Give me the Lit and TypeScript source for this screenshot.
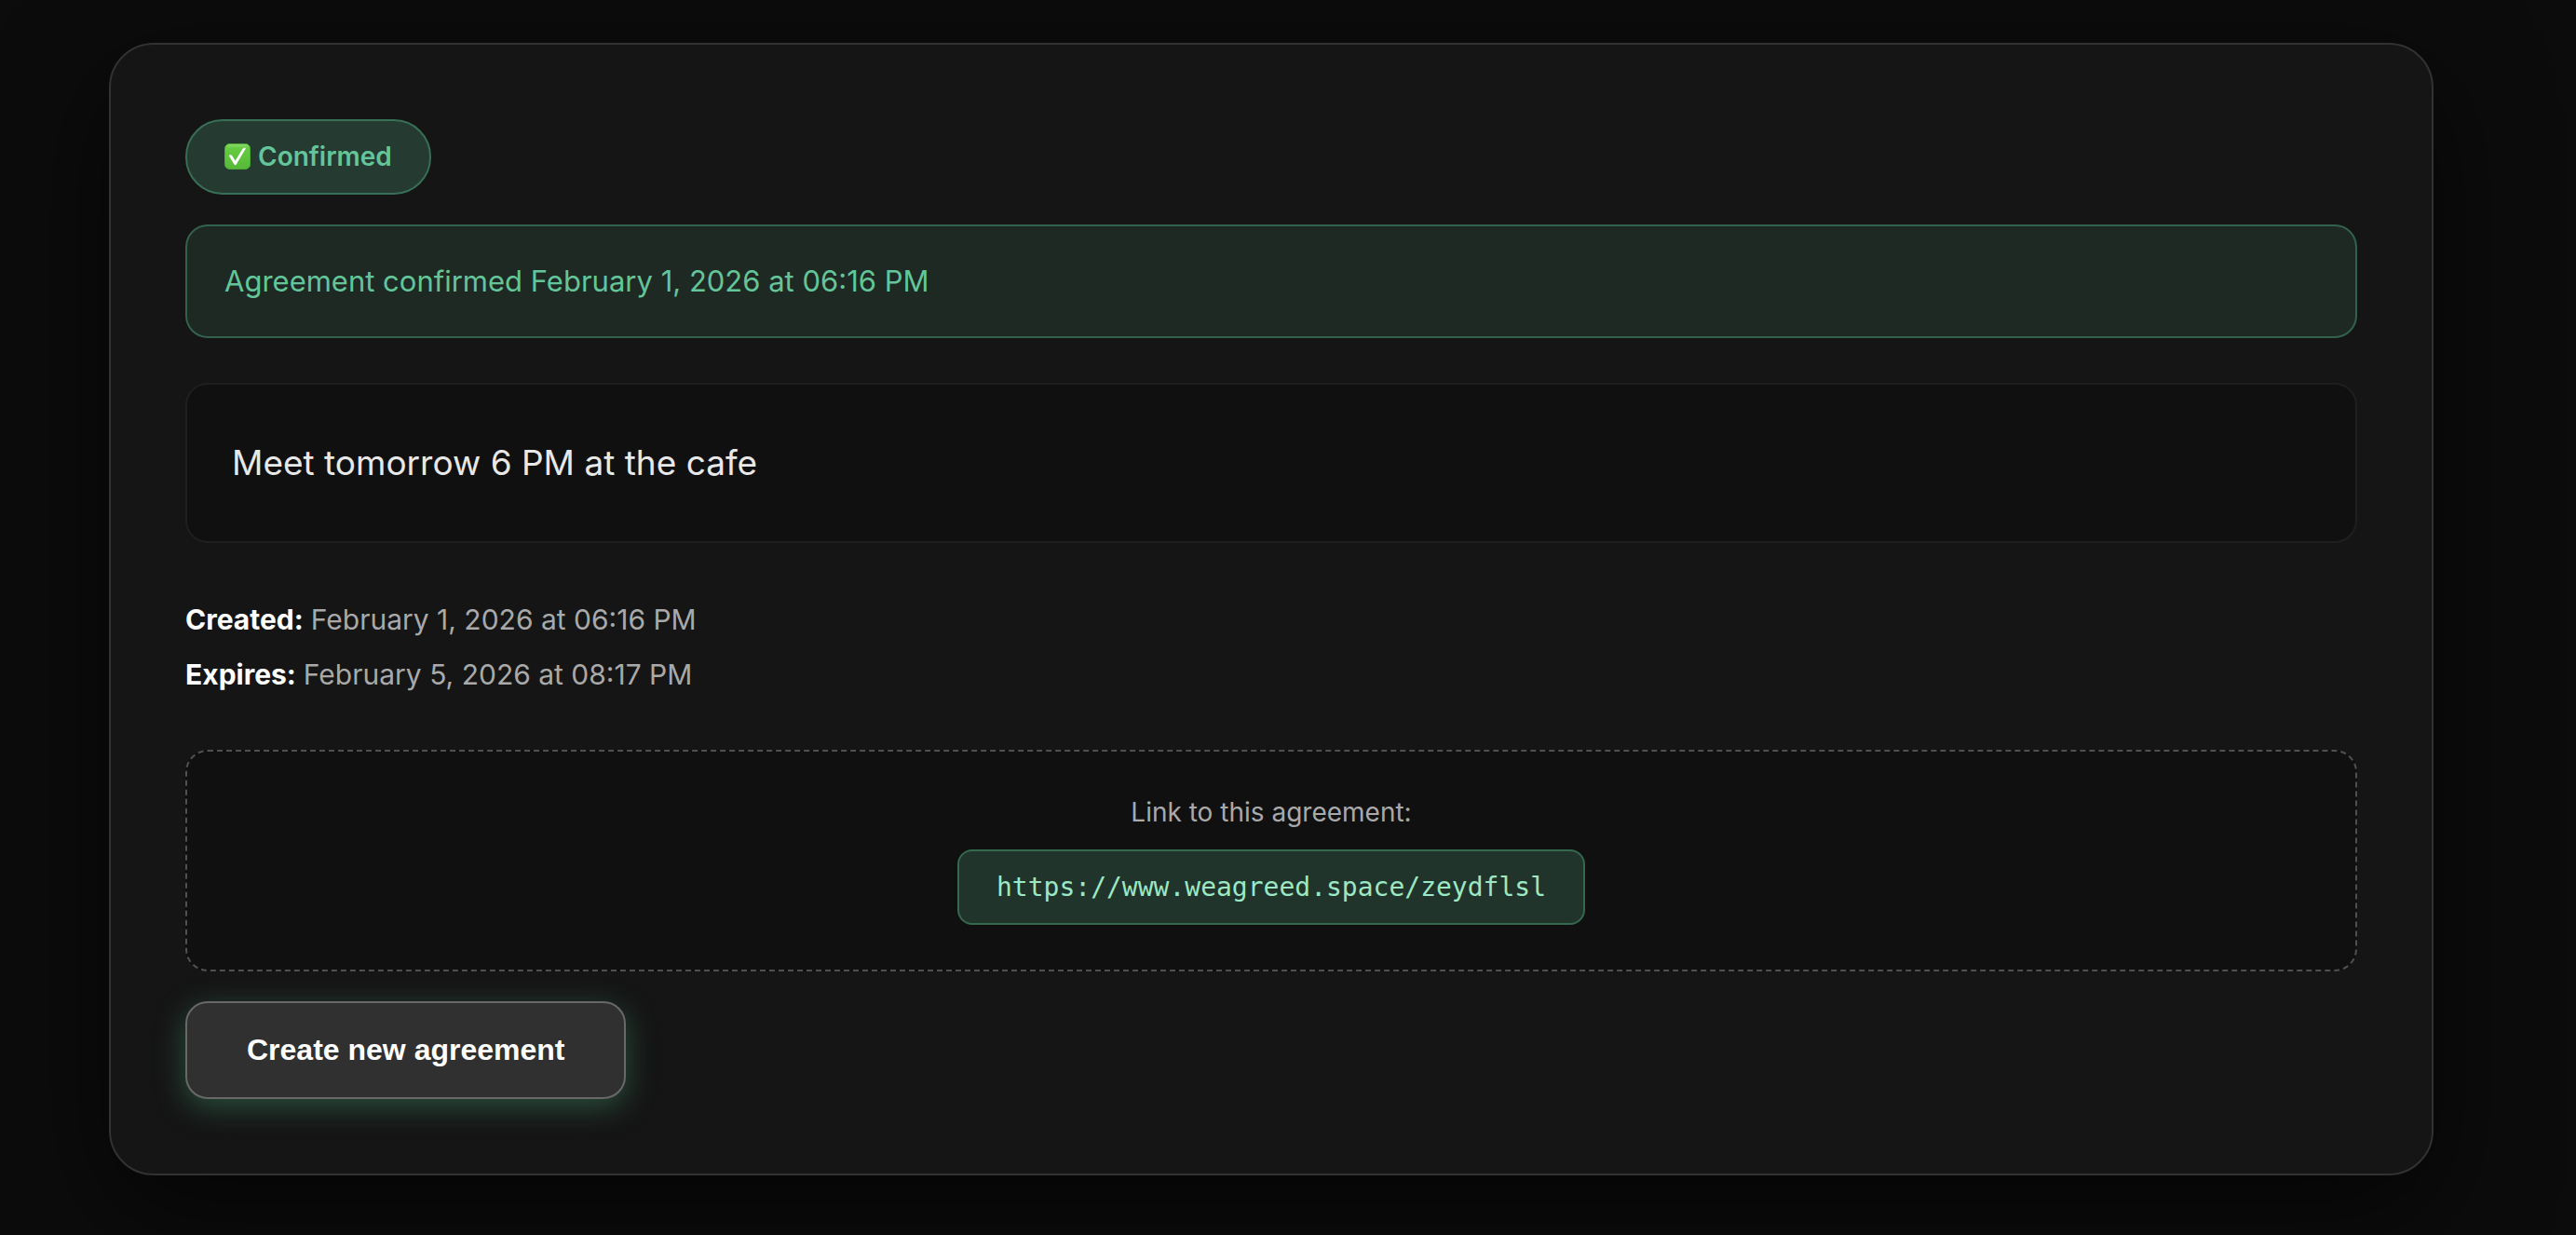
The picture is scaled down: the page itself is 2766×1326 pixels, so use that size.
import { LitElement, html, css, svg } from "lit";
import { customElement, property } from "lit/decorators.js";

const checkMark = svg`
  <defs>
    <linearGradient id="tile" x1="0" y1="0" x2="0" y2="1">
      <stop offset="0" stop-color="#8edc6c" />
      <stop offset="0.18" stop-color="#66cb42" />
      <stop offset="1" stop-color="#56b938" />
    </linearGradient>
  </defs>
  <rect x="0.5" y="0.5" width="27" height="27" rx="5" fill="url(#tile)" stroke="#4fa838" />
  <path d="M5 13.6 C5.4 12 7.4 11.8 8.4 13.6 L11.6 18.6 L19.6 5.8 C20.4 4.6 22.2 4.6 23 5.2 L12.8 22.4 C12.2 23.4 11 23.4 10.4 22.4 Z" fill="#fff" />
`;

@customElement("agreement-card")
export class AgreementCard extends LitElement {
  @property() message = "";
  @property() created = "";
  @property() expires = "";
  @property() link = "";

  static styles = css`
    :host {
      display: block;
    }
    .card {
      display: flex;
      flex-direction: column;
      align-items: stretch;
      padding: 80px;
      border: 2px solid #323232;
      border-radius: 48px;
      background: #151515;
      box-shadow: 0 40px 120px rgba(0, 0, 0, 0.6);
    }
    .badge {
      display: flex;
      align-items: center;
      align-self: flex-start;
      gap: 8px;
      padding: 16px 40px;
      border: 2px solid #386f57;
      border-radius: 40px;
      background: #253a31;
      color: #63c599;
      font-size: 28px;
      font-weight: 600;
      line-height: 45px;
    }
    .check {
      width: 28px;
      height: 28px;
      margin-bottom: 2px;
    }
    .notice {
      margin: 32px 0 0;
      padding: 32px 40px;
      border: 2px solid #32624d;
      border-radius: 24px;
      background: #1e2923;
      color: #63c599;
      font-size: 31px;
      line-height: 54px;
    }
    .message {
      margin: 48px 0 0;
      padding: 48px;
      border: 2px solid #1f1f1f;
      border-radius: 24px;
      background: #101010;
      color: #e8e8e8;
      font-size: 37px;
      line-height: 72px;
    }
    .meta {
      margin: 57px 0 0;
      color: #a9a9a9;
      font-size: 30px;
      line-height: 51px;
    }
    .row {
      display: flex;
      gap: 8px;
    }
    .row + .row {
      margin-top: 8px;
    }
    dt {
      color: #fff;
      font-weight: 700;
    }
    dd {
      margin: 0;
    }
    .share {
      display: flex;
      flex-direction: column;
      align-items: center;
      gap: 16px;
      margin: 55px 0 0;
      padding: 41px 40px 48px;
      border: 2px dashed #505050;
      border-radius: 24px;
      background: #101010;
    }
    .label {
      margin: 0;
      color: #a9a9a9;
      font-size: 28px;
      line-height: 48px;
    }
    .link {
      padding: 16px 40px;
      border: 2px solid #35694f;
      border-radius: 16px;
      background: #20342b;
      color: #9ce8c4;
      font-family: "DejaVu Sans Mono", monospace;
      font-size: 28px;
      line-height: 45px;
      text-decoration: none;
    }
    .create {
      align-self: flex-start;
      margin: 32px 0 0;
      padding: 32px 64px;
      border: 2px solid #686868;
      border-radius: 24px;
      background: #303030;
      box-shadow: 0 8px 32px rgba(82, 183, 136, 0.36);
      color: #fff;
      font-family: "Liberation Sans", Arial, sans-serif;
      font-size: 32px;
      font-weight: 700;
      line-height: 37px;
      cursor: pointer;
    }
  `;

  render() {
    return html`
      <article class="card">
        <div class="badge">
          <svg class="check" viewBox="0 0 28 28" aria-hidden="true">${checkMark}</svg>
          <span>Confirmed</span>
        </div>
        <p class="notice">Agreement confirmed ${this.created}</p>
        <p class="message">${this.message}</p>
        <dl class="meta">
          <div class="row"><dt>Created:</dt><dd>${this.created}</dd></div>
          <div class="row"><dt>Expires:</dt><dd>${this.expires}</dd></div>
        </dl>
        <section class="share">
          <p class="label" id="link-label">Link to this agreement:</p>
          <a class="link" href=${this.link} aria-describedby="link-label">${this.link}</a>
        </section>
        <button class="create" type="button">Create new agreement</button>
      </article>
    `;
  }
}

@customElement("app-root")
export class AppRoot extends LitElement {
  static styles = css`
    :host {
      display: block;
      box-sizing: border-box;
      min-height: 100vh;
      padding: 46px 153px 64px 117px;
      overflow: hidden;
      background: #0c0c0c;
      font-family: Inter, "Liberation Sans", sans-serif;
    }
  `;

  render() {
    return html`
      <agreement-card
        message="Meet tomorrow 6 PM at the cafe"
        created="February 1, 2026 at 06:16 PM"
        expires="February 5, 2026 at 08:17 PM"
        link="https://www.weagreed.space/zeydflsl"
      ></agreement-card>
    `;
  }
}
